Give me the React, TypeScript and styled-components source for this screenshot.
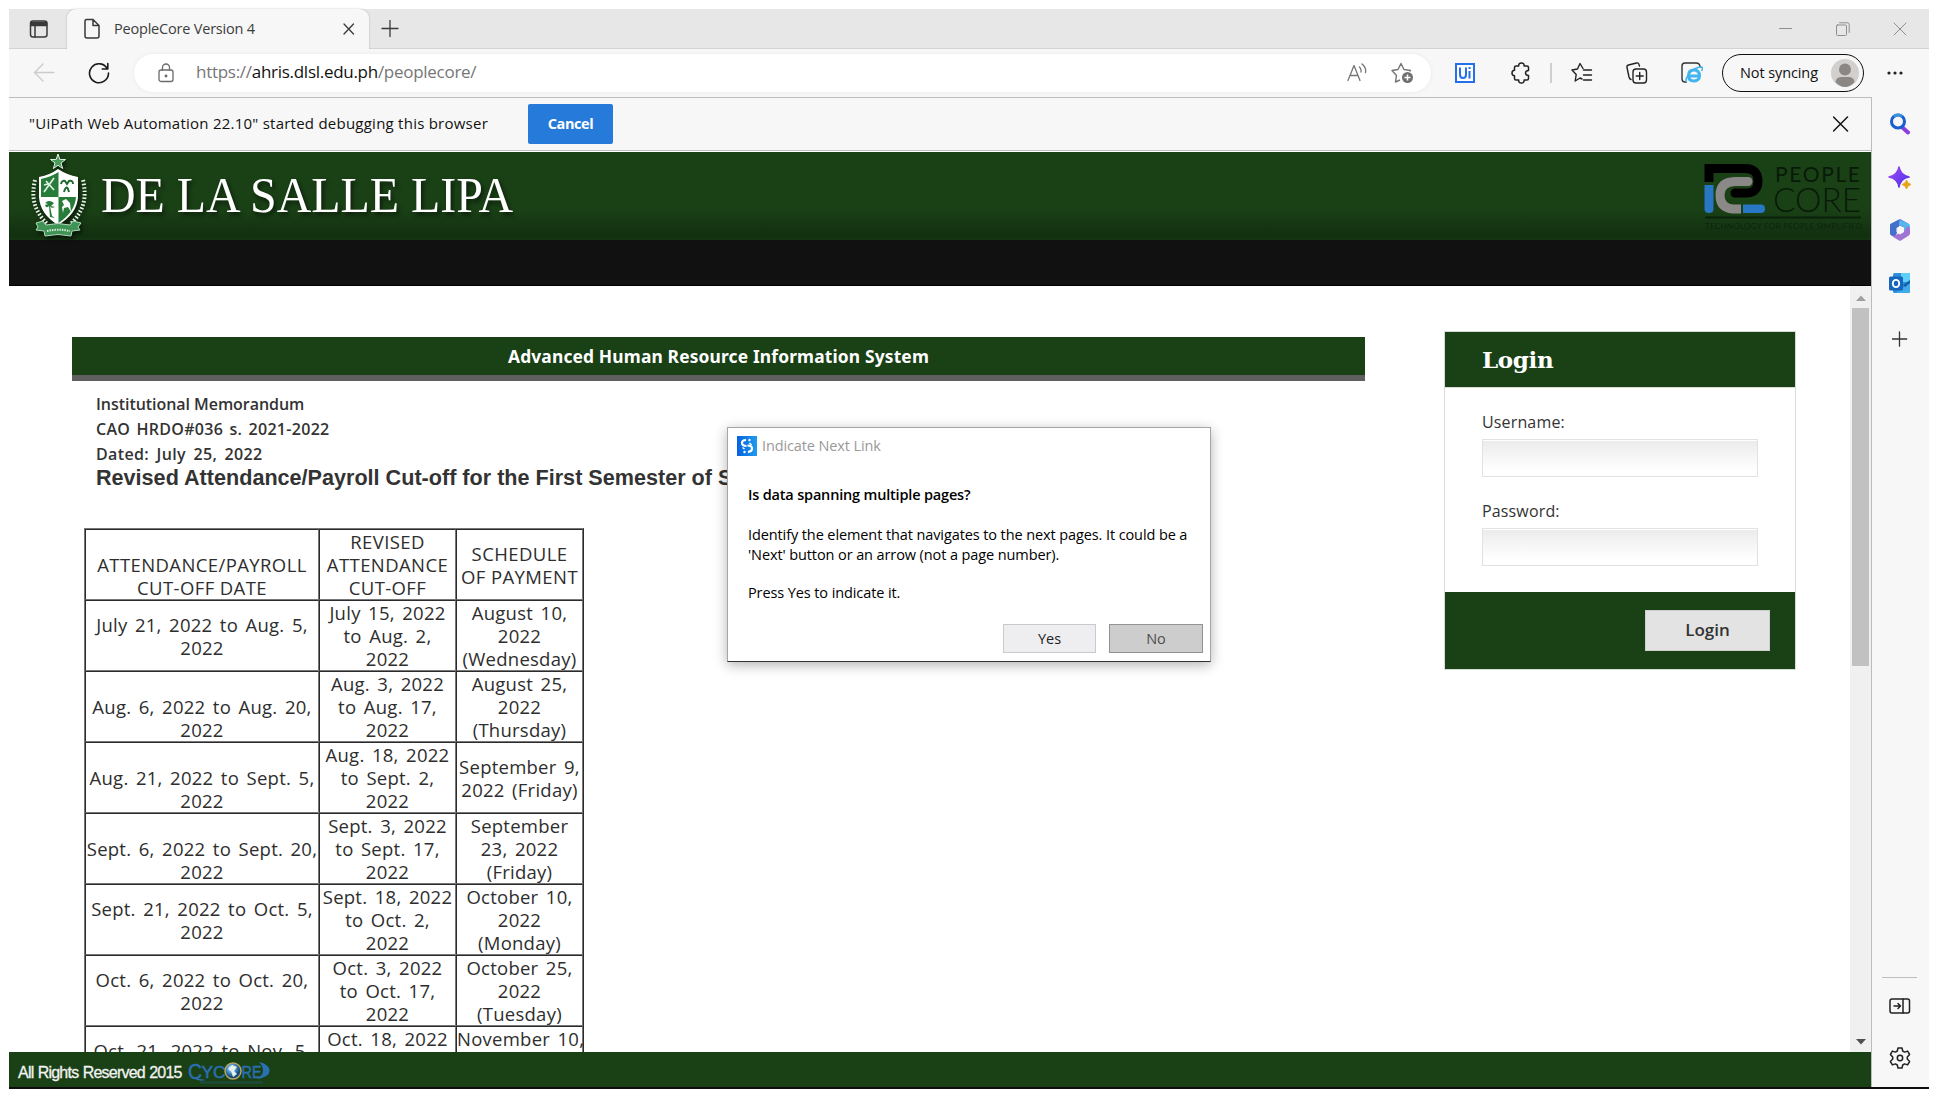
import React from "react";
import styled, { createGlobalStyle } from "styled-components";

const GREEN = "#1a4016";
const UI = `"Open Sans", "Noto Sans", sans-serif`;

const Global = createGlobalStyle`
  * { box-sizing: border-box; }
  body { margin: 0; background: #fff; }
  svg { display: block; flex: none; }
`;

const Screen = styled.div`
  position: relative;
  width: 1938px;
  height: 1098px;
  padding: 9px;
  overflow: hidden;
  background: #fff;
  font-family: ${UI};
`;
const Desktop = styled.div`
  width: 1920px;
  height: 1080px;
  display: flex;
  flex-direction: column;
  background: #f7f7f7;
  border-bottom: 2px solid #0d0d0d;
`;

/* ---------- window chrome ---------- */
const TabStrip = styled.div`
  height: 40px;
  flex: none;
  display: flex;
  align-items: stretch;
  background: #e7e7e7;
  box-shadow: inset 0 -1px 0 #d3d3d3;
`;
const TabMenu = styled.div`
  width: 58px;
  display: flex;
  align-items: center;
  padding-left: 20px;
`;
const Tab = styled.div`
  width: 302px;
  display: flex;
  align-items: center;
  background: #f7f7f7;
  border-radius: 9px 9px 0 0;
  box-shadow: 0 0 2px rgba(0, 0, 0, 0.25);
  clip-path: inset(-2px -3px 0 -3px);
  padding: 0 14px 0 16px;
`;
const TabTitle = styled.span`
  flex: 1;
  margin-left: 13px;
  padding-bottom: 2px;
  font-size: 14.5px;
  letter-spacing: -0.2px;
  color: #3d3d3d;
`;
const NewTab = styled.div`
  display: flex;
  align-items: center;
  padding-left: 12px;
  flex: 1;
`;
const WindowButtons = styled.div`
  display: flex;
  align-items: center;
  gap: 43px;
  padding-right: 22px;
`;
const Toolbar = styled.div`
  height: 48px;
  flex: none;
  display: flex;
  align-items: center;
  padding-left: 24px;
`;
const Nav = styled.div`
  width: 101px;
  display: flex;
  align-items: center;
  gap: 33px;
`;
const AddressBar = styled.div`
  width: 1297px;
  height: 38px;
  border-radius: 19px;
  background: #fff;
  display: flex;
  align-items: center;
  padding: 0 17px 0 24px;
  box-shadow: 0 0 4px rgba(0, 0, 0, 0.06);
`;
const Url = styled.div`
  flex: 1;
  margin-left: 22px;
  padding-bottom: 3px;
  font-size: 17px;
  letter-spacing: -0.28px;
  color: #767676;
  b { font-weight: 400; color: #111; }
`;
const Actions = styled.div`
  flex: 1;
  display: grid;
  grid-template-columns: 68px 44px 16px 46px 64px 45px auto 1fr;
  align-items: center;
  justify-items: center;
  padding-right: 4px;
`;
const Separator = styled.div`
  width: 2px;
  height: 20px;
  background: #cfcfcf;
`;
const Profile = styled.div`
  width: 142px;
  height: 38px;
  margin-left: 8px;
  border: 1.5px solid #111;
  border-radius: 19px;
  display: flex;
  align-items: center;
  justify-content: space-between;
  padding: 0 4px 0 17px;
  font-size: 14.5px;
  letter-spacing: -0.1px;
  color: #111;
  white-space: nowrap;
  span { padding-bottom: 2px; }
`;

/* ---------- page area ---------- */
const Body = styled.div`
  flex: 1;
  min-height: 0;
  display: flex;
`;
const Page = styled.div`
  width: 1863px;
  border-right: 1px solid #bcbcbc;
  border-top: 1px solid #bcbcbc;
  display: flex;
  flex-direction: column;
`;
const InfoBar = styled.div`
  height: 54px;
  flex: none;
  display: flex;
  align-items: center;
  padding: 0 22px 1px 20px;
  border-bottom: 1px solid #fff;
  box-shadow: inset 0 -1px 0 #bdbdc2;
`;
const InfoText = styled.div`
  width: 499px;
  padding-bottom: 2px;
  font-size: 15px;
  letter-spacing: 0.24px;
  color: #111;
  white-space: nowrap;
`;
const CancelButton = styled.button`
  width: 85px;
  height: 40px;
  border: 0;
  border-radius: 2px;
  background: #267ad9;
  color: #fff;
  font: 700 14.5px ${UI};
  letter-spacing: -0.4px;
  padding: 0 0 2px;
`;
const Spacer = styled.div`flex: 1;`;
const Banner = styled.div`
  height: 88px;
  flex: none;
  display: flex;
  justify-content: space-between;
  background: linear-gradient(#1a4016 0, #1a4016 66%, #12300f 96%, #153612 100%);
`;
const MenuBar = styled.div`
  height: 46px;
  flex: none;
  background: #111;
  border-bottom: 1px solid #000;
`;
const Scroller = styled.div`
  flex: 1;
  min-height: 0;
  display: flex;
  background: #fff;
`;
const Content = styled.div`
  flex: 1;
  overflow: hidden;
  display: flex;
  align-items: flex-start;
  padding-left: 63px;
`;
const Main = styled.div`
  width: 1293px;
  padding-top: 51px;
`;
const TitleBar = styled.div`
  height: 44px;
  border-bottom: 6px solid #5f5f5f;
  background: ${GREEN};
  color: #fff;
  text-align: center;
  font: 700 17.4px/39px "Noto Sans", "Open Sans", sans-serif;
  letter-spacing: 0.15px;
`;
const Memo = styled.div`
  padding: 11px 0 1px 24px;
  font-weight: 600;
  font-size: 16px;
  line-height: 25px;
  color: #333;
`;
const MemoLine = styled.div<{ $ls: number; $ws: number }>`
  letter-spacing: ${(p) => p.$ls}px;
  word-spacing: ${(p) => p.$ws}px;
`;
const MemoTitle = styled.div`
  padding-left: 24px;
  width: 719px;
  font: 700 21.6px/24px "Liberation Sans", Arial, sans-serif;
  color: #333;
  white-space: nowrap;
  margin-top: -2px;
`;
const Schedule = styled.table`
  margin: 38px 0 0 12px;
  width: 500px;
  table-layout: fixed;
  border-collapse: separate;
  border-spacing: 0;
  border: 1px solid;
  border-color: #777 #2b2b2b #2b2b2b #777;
`;
const Cell = styled.td<{ $low?: boolean; $head?: boolean }>`
  height: 71px;
  padding: ${(p) => (p.$low ? "23px 0 0" : "0")};
  border: 1px solid;
  border-color: #2b2b2b #777 #777 #2b2b2b;
  text-align: center;
  vertical-align: middle;
  white-space: nowrap;
  font-size: 18.5px;
  font-weight: ${(p) => (p.$head ? 500 : 400)};
  line-height: 23px;
  letter-spacing: ${(p) => (p.$head ? 0.4 : 0.25)}px;
  word-spacing: ${(p) => (p.$head ? 0 : 2.4)}px;
  color: #2e2e2e;
`;
const LoginCard = styled.div`
  width: 352px;
  margin: 45px 0 0 79px;
  border: 1px solid #d6ddd5;
`;
const LoginHead = styled.div`
  height: 56px;
  padding-left: 37px;
  background: ${GREEN};
  border-bottom: 1px solid #d6ddd5;
  color: #fff;
  font: 700 23px/56px "DejaVu Serif", serif;
  letter-spacing: -0.35px;
`;
const LoginFields = styled.div`
  height: 204px;
  padding: 21px 37px 0;
`;
const Field = styled.label`
  display: block;
  height: 89px;
  font-size: 16px;
  line-height: 26px;
  letter-spacing: 0.15px;
  color: #333;
`;
const Input = styled.input`
  display: block;
  width: 276px;
  height: 38px;
  margin-top: 4px;
  border: 1px solid #e2e2e2;
  box-shadow: inset 0 1px 0 #fff;
  background: linear-gradient(#ebebeb, #fff 85%);
`;
const LoginFoot = styled.div`
  height: 77px;
  display: flex;
  justify-content: flex-end;
  padding: 18px 25px 0 0;
  background: ${GREEN};
`;
const LoginButton = styled.button`
  width: 125px;
  height: 41px;
  border: 1px solid #cfcfcf;
  background: #e3e3e3;
  color: #333;
  font: 600 17px ${UI};
  padding: 0 0 2px;
`;
const Scrollbar = styled.div`
  width: 21px;
  background: #f0f0f0;
  display: flex;
  flex-direction: column;
  align-items: center;
  justify-content: space-between;
  padding: 9px 0 7px;
`;
const Thumb = styled.div`
  width: 17px;
  height: 358px;
  margin: 7px 0 auto;
  background: #c1c1c1;
`;
const Footer = styled.div`
  height: 35px;
  flex: none;
  display: flex;
  align-items: center;
  background: ${GREEN};
  color: #f2f2f2;
  font: 16px "Liberation Sans", Arial, sans-serif;
  letter-spacing: -0.78px;
  word-spacing: 0.6px;
  padding: 7px 0 0 9px;
  -webkit-text-stroke: 0.3px #f2f2f2;
`;

/* ---------- side rail ---------- */
const Rail = styled.div`
  width: 57px;
  padding-right: 2px;
  display: flex;
  flex-direction: column;
  align-items: center;
`;
const RailItem = styled.div<{ $h: number }>`
  height: ${(p) => p.$h}px;
  display: flex;
  align-items: center;
  justify-content: center;
`;
const RailRule = styled.div`
  width: 35px;
  height: 1px;
  margin-bottom: 4px;
  background: #bdbdbd;
`;

/* ---------- dialog ---------- */
const Dialog = styled.div`
  position: absolute;
  left: 727px;
  top: 427px;
  width: 484px;
  height: 235px;
  background: #fff;
  border: 1px solid #a5a5a5;
  border-bottom-color: #333;
  box-shadow: 0 3px 12px rgba(0, 0, 0, 0.3);
  display: flex;
  flex-direction: column;
`;
const DialogTitle = styled.div`
  display: flex;
  align-items: center;
  gap: 5px;
  padding: 8px 0 0 9px;
  height: 28px;
  font-size: 14.5px;
  letter-spacing: -0.12px;
  color: #9a9a9a;
  span { padding-bottom: 1px; }
`;
const DialogText = styled.div<{ $bold?: boolean; $top: number }>`
  padding: ${(p) => p.$top}px 0 0 20px;
  font-size: 14.5px;
  line-height: 20px;
  letter-spacing: ${(p) => (p.$bold ? "-0.18px" : "-0.1px")};
  font-weight: ${(p) => (p.$bold ? 600 : 400)};
  color: #000;
  white-space: nowrap;
`;
const DialogButtons = styled.div`
  display: flex;
  justify-content: flex-end;
  gap: 13px;
  padding: 21px 7px 0 0;
`;
const DialogButton = styled.button<{ $dark?: boolean }>`
  width: ${(p) => (p.$dark ? 94 : 93)}px;
  height: 29px;
  padding: 0;
  border: 1px solid ${(p) => (p.$dark ? "#939393" : "#c9cacd")};
  background: ${(p) => (p.$dark ? "#cdcdcd" : "#eeeef0")};
  color: ${(p) => (p.$dark ? "#4e4e4e" : "#222")};
  font: 14.5px ${UI};
`;

const Stroke: React.FC<{ w: number; h?: number; c?: string; sw?: number; children: React.ReactNode }> = ({
  w, h = w, c = "#222", sw = 1.4, children,
}) => (
  <svg width={w} height={h} viewBox={`0 0 ${w} ${h}`} fill="none" stroke={c} strokeWidth={sw} strokeLinecap="round" strokeLinejoin="round">
    {children}
  </svg>
);

const Crest = () => (
  <svg width="510" height="88" viewBox="0 0 510 88" style={{ filter: "drop-shadow(2px 3px 2px rgba(0,0,0,.55))" }}>
    <path d="M49 2l1.800 5.400 5.700.1-4.500 3.500 1.700 5.500-4.700-3.200-4.600 3.200 1.600-5.500-4.500-3.500 5.700-.1z" fill="#4a9c5c" stroke="#e6f3e8" strokeWidth="1" />
    <path d="M26 28c-4 18-1 30 12 44M74 28c4 18 1 30-12 44" fill="none" stroke="#e8f2e8" strokeWidth="4" strokeDasharray="1.600 1.900" />
    <path d="M30 25q11-2 19-8 9 6 20 8v20q-1 17-20 28-18-11-19-28z" fill="#fff" />
    <path d="M32 27q10-2 17.500-7v25H32zM49.500 45H67q-1 15-17.500 26z" fill="#277c3a" />
    <path d="M35 40l10-14M37 29l8 9M35 33l4-1" stroke="#dff0e2" strokeWidth="1.700" />
    <path d="M52 32q1-4 4-3l2 3 2-3q4-1 4 3M56 37q2-3 3 0l1 3m-4-3l-1 3" stroke="#1c6a30" strokeWidth="2" fill="none" />
    <path d="M36 51q4-4 9 0l-3 3 4 1q-4 2-5-1l2 10 3 2-5-1-1-11q-3 3-4-1l3-1z" fill="#277c3a" />
    <path d="M53 49l4-2 4 4 1 9-3-5-4 1-1 5-1-6 2-2z" fill="#fff" />
    <path d="M27 71l7-2 3 4q12-3 24 0l3-4 8 2-3 4 2 3-8 1-1 5q-13-3-26 0l-1-5-8-1 2-3z" fill="#3f9455" stroke="#b5d9bc" strokeWidth="1" />
    <path d="M38 79q11-2.500 23 0" stroke="#d7eadb" strokeWidth="2" strokeDasharray="1.500 1" fill="none" />
    <text x="92" y="60" fill="#fff" fontFamily='"Liberation Serif", serif' fontSize="51" textLength="412" lengthAdjust="spacingAndGlyphs">DE LA SALLE LIPA</text>
  </svg>
);

const PeopleCoreLogo = () => (
  <svg width="172" height="88" viewBox="0 0 172 88" fontFamily='Lato, "Open Sans", sans-serif'>
    <path d="M10 30V16.500H46Q59 16.500 59 29T46 41H36" fill="none" stroke="#000" strokeWidth="9" strokeLinejoin="miter" />
    <circle cx="36" cy="41" r="4.500" fill="#000" />
    <path d="M49 29.500H36Q21 30 21 43T34 57H42" fill="none" stroke="#8b8888" strokeWidth="9" />
    <circle cx="49" cy="29.500" r="4.500" fill="#8b8888" />
    <path d="M5.500 33h9v24q0 4-4.500 4t-4.500-4z" fill="#2777c4" />
    <path d="M44 52.500h18q4 0 4 4.300t-4 4.200H44z" fill="#2777c4" />
    <text x="76" y="30" fontSize="21" textLength="85" fill="#081a08">PEOPLE</text>
    <text x="74" y="60" fontSize="34" fontWeight="300" textLength="88" lengthAdjust="spacingAndGlyphs" fill="#081a08">CORE</text>
    <path d="M6 65.500H162" stroke="#0b220a" strokeWidth="2" />
    <text x="6" y="77" fontSize="8" textLength="157" fill="#0b240b">TECHNOLOGY FOR PEOPLE SIMPLIFIED</text>
  </svg>
);

const Cycore = () => (
  <svg width="86" height="28" viewBox="0 0 86 28" style={{ marginLeft: 6, letterSpacing: 0 }}>
    <defs>
      <radialGradient id="globe" cx=".4" cy=".35"><stop offset="0" stopColor="#fff" /><stop offset=".5" stopColor="#4d9bd0" /><stop offset="1" stopColor="#184c79" /></radialGradient>
    </defs>
    <g fill="#2a6fb0" stroke="#2a6fb0" strokeWidth=".5" fontFamily='"Liberation Sans", sans-serif'>
      <text x="0" y="20" fontSize="22" textLength="14" lengthAdjust="spacingAndGlyphs">C</text>
      <text x="13.500" y="19" fontSize="17" textLength="24" lengthAdjust="spacingAndGlyphs">YC</text>
      <text x="53.500" y="19" fontSize="17" textLength="20" lengthAdjust="spacingAndGlyphs">RE</text>
    </g>
    <path d="M71 3q10 2 10.500 8.500T69 20q6-4 6-8.500T71 3zM6 19q4 4 12 2" fill="#2a6fb0" />
    <circle cx="45" cy="12" r="8" fill="url(#globe)" stroke="#b4a564" strokeWidth="1.500" />
    <path d="M44 6l5 2-3 4 3 3-4 3-2-6-3-2z" fill="#e9eef0" />
    <path d="M12 23.500H75" stroke="#2368a6" strokeWidth="2" opacity=".3" />
  </svg>
);

const rows: { a: string[]; b: string[]; c: string[]; low?: boolean }[] = [
  { a: ["ATTENDANCE/PAYROLL", "CUT-OFF DATE"], b: ["REVISED", "ATTENDANCE", "CUT-OFF"], c: ["SCHEDULE", "OF PAYMENT"], low: true },
  { a: ["July 21, 2022 to Aug. 5,", "2022"], b: ["July 15, 2022", "to Aug. 2,", "2022"], c: ["August 10,", "2022", "(Wednesday)"] },
  { a: ["Aug. 6, 2022 to Aug. 20,", "2022"], b: ["Aug. 3, 2022", "to Aug. 17,", "2022"], c: ["August 25,", "2022", "(Thursday)"], low: true },
  { a: ["Aug. 21, 2022 to Sept. 5,", "2022"], b: ["Aug. 18, 2022", "to Sept. 2,", "2022"], c: ["September 9,", "2022 (Friday)"], low: true },
  { a: ["Sept. 6, 2022 to Sept. 20,", "2022"], b: ["Sept. 3, 2022", "to Sept. 17,", "2022"], c: ["September", "23, 2022", "(Friday)"], low: true },
  { a: ["Sept. 21, 2022 to Oct. 5,", "2022"], b: ["Sept. 18, 2022", "to Oct. 2,", "2022"], c: ["October 10,", "2022", "(Monday)"] },
  { a: ["Oct. 6, 2022 to Oct. 20,", "2022"], b: ["Oct. 3, 2022", "to Oct. 17,", "2022"], c: ["October 25,", "2022", "(Tuesday)"] },
  { a: ["Oct. 21, 2022 to Nov. 5,", "2022"], b: ["Oct. 18, 2022", "to Nov. 2,", "2022"], c: ["November 10,", "2022", "(Thursday)"] },
];

const Lines = ({ of }: { of: string[] }) => (
  <>{of.map((t, i) => <React.Fragment key={i}>{i > 0 && <br />}{t}</React.Fragment>)}</>
);

export default function App() {
  return (
    <Screen>
      <Global />
      <Desktop>
        <TabStrip>
          <TabMenu>
            <Stroke w={20} c="#3a3a3a" sw={1.5}>
              <rect x="1.500" y="2" width="16.500" height="16" rx="2.500" />
              <path d="M2 3.500h15.500v3H2z" fill="#3a3a3a" />
              <path d="M6 6v12" />
            </Stroke>
          </TabMenu>
          <Tab>
            <Stroke w={18} h={22} c="#3a3a3a" sw={1.5}>
              <path d="M3.500 1.500h6.500l6 6V18a2 2 0 0 1-2 2H4a2 2 0 0 1-2-2V3q0-1.500 1.500-1.500zM10 1.500V7.500h6" />
            </Stroke>
            <TabTitle>PeopleCore Version 4</TabTitle>
            <Stroke w={12} c="#3a3a3a" sw={1.300}><path d="M1 1l9.500 10M10.500 1L1 11" /></Stroke>
          </Tab>
          <NewTab><Stroke w={18} c="#3a3a3a" sw={1.300}><path d="M9 .5v16M1 8.500h16" /></Stroke></NewTab>
          <WindowButtons>
            <Stroke w={14} c="#8e8e8e" sw={1}><path d="M.500 6.500h12" /></Stroke>
            <Stroke w={14} c="#8e8e8e" sw={1}><rect x=".5" y="3" width="10" height="10.500" rx="1" /><path d="M3.500.8h8q1.700 0 1.700 1.700v8" /></Stroke>
            <Stroke w={14} c="#8e8e8e" sw={1}><path d="M1 1l12 12M13 1L1 13" /></Stroke>
          </WindowButtons>
        </TabStrip>

        <Toolbar>
          <Nav>
            <Stroke w={22} c="#cbcbcb" sw={1.400}><path d="M21 10.500H1.500M10 2L1.500 10.500l8.500 8.500" /></Stroke>
            <Stroke w={22} c="#1b1b1b" sw={1.600}><path d="M19.500 7A9.500 9.500 0 1 0 20.500 11M19.800 1.500V7h-5.500" /></Stroke>
          </Nav>
          <AddressBar>
            <Stroke w={16} h={20} c="#6b6b6b" sw={1.300}>
              <rect x="1" y="7" width="14" height="11.500" rx="2" /><path d="M4.500 7V4.500a3.500 3.500 0 0 1 7 0V7" /><circle cx="8" cy="13" r=".8" fill="#6b6b6b" />
            </Stroke>
            <Url>https://<b>ahris.dlsl.edu.ph</b>/peoplecore/</Url>
            <Stroke w={20} c="#757575" sw={1.300}>
              <path d="M1 17.500L7 2.500l6 15M3 12.500h8M12.500 4q2 2 1.500 5M15 1q4.500 3.500 3.500 8.500" />
            </Stroke>
            <svg width="23" height="22" viewBox="0 0 23 22" style={{ marginLeft: 24 }} fill="none" stroke="#757575" strokeWidth="1.400" strokeLinejoin="round">
              <path d="M9 18l-4.500 2 1-6.500L1 8.500l6-1L10 1.500l3 6 6.500 1-1 1" />
              <circle cx="16.500" cy="15.500" r="5.500" fill="#707070" stroke="none" />
              <path d="M16.500 12.500v6M13.500 15.500h6" stroke="#fff" />
            </svg>
          </AddressBar>
          <Actions>
            <svg width="20" height="20" viewBox="0 0 20 20">
              <path d="M1 1h18v18H1z" fill="#fff" stroke="#2470e8" strokeWidth="2" />
              <path d="M5 4.500v7q0 3.500 3 3.500t3-3.500v-7M14.500 8v7.500M14.500 4v2" fill="none" stroke="#2470e8" strokeWidth="2" />
            </svg>
            <Stroke w={20} h={22} sw={1.500}>
              <path d="M5 4H7.700q-.3-3 2.700-3t2.700 3H16q1.500 0 1.500 1.500V8.500q-3 .2-3 2.500t3 2.500v3Q17.500 18 16 18h-2.900q.3 3-2.700 3t-2.700-3H5q-1.500 0-1.500-1.500v-2.800Q1 13.500 1 11t2.500-2.700V5.500Q3.500 4 5 4z" />
            </Stroke>
            <Separator />
            <Stroke w={22} sw={1.400}>
              <path d="M12 6.500L9 1.500 6.500 7 1 8l4.200 4.500-1 6.500L9 16l2 1M12.500 8h8M12.500 13h8M12.500 18h8" />
            </Stroke>
            <Stroke w={22} sw={1.400}>
              <rect x="7" y="7" width="13.500" height="14" rx="3" /><path d="M13.700 10.500v7M10.200 14h7M5 17.500Q3.500 17 3 15L1 5.500Q.5 3.500 2.500 3l8-2q2-.5 2.500 1.500l.5 1.500" />
            </Stroke>
            <svg width="22" height="22" viewBox="0 0 22 22">
              <path d="M6 20H4q-3 0-3-3V4q0-3 3-3h11q4 0 4 4" fill="none" stroke="#333" strokeWidth="1.400" />
              <path d="M18.500 15.500q-1.500 3.500-5.500 3.500-5.500 0-5.500-5.500T13 8q5.500 0 5.500 6H9" fill="none" stroke="#42b4ee" strokeWidth="3" />
              <path d="M6 20q-3-1 2-8T21 5q1 1-.5 4" fill="none" stroke="#42b4ee" strokeWidth="1.500" />
            </svg>
            <Profile>
              <span>Not syncing</span>
              <svg width="28" height="28" viewBox="0 0 28 28">
                <circle cx="14" cy="14" r="14" fill="#d2d0ce" />
                <circle cx="14" cy="10.500" r="6" fill="#8a8785" />
                <path d="M4.500 23Q5 18 11 18h6q6 0 6.500 5Q19 28 14 28T4.500 23z" fill="#8a8785" />
              </svg>
            </Profile>
            <svg width="18" height="6" viewBox="0 0 18 6" fill="#222"><circle cx="3" cy="3" r="1.600" /><circle cx="9" cy="3" r="1.600" /><circle cx="15" cy="3" r="1.600" /></svg>
          </Actions>
        </Toolbar>

        <Body>
          <Page>
            <InfoBar>
              <InfoText>"UiPath Web Automation 22.10" started debugging this browser</InfoText>
              <CancelButton>Cancel</CancelButton>
              <Spacer />
              <Stroke w={16} c="#111" sw={1.500}><path d="M.500 1l14 14M14.500 1L.500 15" /></Stroke>
            </InfoBar>
            <Banner><Crest /><PeopleCoreLogo /></Banner>
            <MenuBar />
            <Scroller>
              <Content>
                <Main>
                  <TitleBar>Advanced Human Resource Information System</TitleBar>
                  <Memo>
                    <MemoLine $ls={-0.05} $ws={0}>Institutional Memorandum</MemoLine>
                    <MemoLine $ls={0.3} $ws={1.8}>CAO HRDO#036 s. 2021-2022</MemoLine>
                    <MemoLine $ls={0.35} $ws={3}>Dated: July 25, 2022</MemoLine>
                  </Memo>
                  <MemoTitle>Revised Attendance/Payroll Cut-off for the First Semester of S</MemoTitle>
                  <Schedule>
                    <colgroup><col width="234" /><col width="137" /><col width="127" /></colgroup>
                    <tbody>
                      {rows.map((r, i) => (
                        <tr key={i}>
                          <Cell $low={r.low} $head={i === 0}><Lines of={r.a} /></Cell>
                          <Cell $head={i === 0}><Lines of={r.b} /></Cell>
                          <Cell $head={i === 0}><Lines of={r.c} /></Cell>
                        </tr>
                      ))}
                    </tbody>
                  </Schedule>
                </Main>
                <LoginCard>
                  <LoginHead>Login</LoginHead>
                  <LoginFields>
                    <Field>Username:<Input /></Field>
                    <Field>Password:<Input type="password" /></Field>
                  </LoginFields>
                  <LoginFoot><LoginButton>Login</LoginButton></LoginFoot>
                </LoginCard>
              </Content>
              <Scrollbar>
                <svg width="10" height="6" viewBox="0 0 10 6"><path d="M0 6l5-5.500L10 6z" fill="#a0a0a0" /></svg>
                <Thumb />
                <svg width="10" height="6" viewBox="0 0 10 6"><path d="M0 0l5 5.500L10 0z" fill="#505050" /></svg>
              </Scrollbar>
            </Scroller>
            <Footer>All Rights Reserved 2015<Cycore /></Footer>
          </Page>

          <Rail>
            <RailItem $h={54}>
              <svg width="22" height="22" viewBox="0 0 22 22" fill="none">
                <path d="M13.500 14.500l5.500 5" stroke="#8a3fe0" strokeWidth="4" strokeLinecap="round" />
                <circle cx="9" cy="8.500" r="6.500" stroke="#1a5fd0" strokeWidth="3" /><path d="M5 3.500a6.500 6.500 0 0 1 8 0" stroke="#3a93dc" strokeWidth="3" />
              </svg>
            </RailItem>
            <RailItem $h={54}>
              <svg width="24" height="24" viewBox="0 0 24 24">
                <defs><linearGradient id="spark" x1="0" y1="0" x2="1" y2="1"><stop offset="0" stopColor="#a34bf5" /><stop offset="1" stopColor="#4a2fe8" /></linearGradient></defs>
                <path d="M11 1q1.500 8.500 10 10-8.500 1.500-10 10Q9.500 12.500 1 11q8.500-1.500 10-10z" fill="url(#spark)" stroke="url(#spark)" strokeWidth="1.500" strokeLinejoin="round" />
                <path d="M18.500 14q.7 3.800 4.500 4.500-3.800.7-4.500 4.500-.7-3.800-4.500-4.500 3.800-.7 4.500-4.500z" fill="#e6a414" stroke="#e6a414" />
              </svg>
            </RailItem>
            <RailItem $h={50}>
              <svg width="22" height="24" viewBox="0 0 22 24">
                <path d="M11 1L20 6v6L14 9 9 7l-1 8-2 4-5-3V7z" fill="#5b62c9" />
                <path d="M10 1.500L20 6q1 .5 1 2v8l-6-3V9L9 6.500z" fill="#56b6ee" />
                <path d="M1 7q0-1 1-1.500L9 2q2-1 1 3v4l-3 3v4l-4 2q-2-1-2-3z" fill="#4371c9" />
                <path d="M21 15q0 2-1.500 2.800L12 22.500q-1 .6-2 0L2.500 18q3 1 6-2l6-3q3-1 3-5 3.500 1 3.500 3z" fill="#a174d4" />
                <path d="M11 8l4 2v4l-4 2.500L7.500 14v-4z" fill="#f7f7f7" />
              </svg>
            </RailItem>
            <RailItem $h={55}>
              <svg width="22" height="22" viewBox="0 0 22 22">
                <rect x="4" y="1" width="17" height="20" rx="1.500" fill="#2f8fdc" /><path d="M12 1h7.500q1.500 0 1.500 1.500V10h-9z" fill="#5cd0fb" /><path d="M7 21l14-10v8.500q0 1.500-1.500 1.500z" fill="#3fa9ea" /><path d="M14 13l7-5v3l-5 4z" fill="#1360a8" />
                <rect x="0" y="4.500" width="14" height="14" rx="1.500" fill="#1666bd" /><ellipse cx="7" cy="11.500" rx="3.200" ry="3.600" fill="none" stroke="#fff" strokeWidth="1.900" />
              </svg>
            </RailItem>
            <RailItem $h={58}><Stroke w={16} c="#333" sw={1.300}><path d="M7.500 .8v14.400M.300 8h14.400" /></Stroke></RailItem>
            <Spacer />
            <RailRule />
            <RailItem $h={47}>
              <Stroke w={22} h={18} c="#222" sw={1.500}><rect x="1" y="2" width="19.500" height="14" rx="2" /><path d="M14 2v14M5 9h6.500M9 6.500L11.500 9 9 11.500" /></Stroke>
            </RailItem>
            <RailItem $h={58}>
              <Stroke w={22} c="#222" sw={1.500}>
                <circle cx="11" cy="11" r="2.700" />
                <path d="M9 1h4l.7 3 1.900 1.100 3-1 2 3.400L18.300 9.900v2.200l2.300 2.400-2 3.400-3-1L13.700 18 13 21H9l-.7-3-1.900-1.100-3 1-2-3.400 2.300-2.400V9.900L1.400 7.500l2-3.400 3 1L8.300 4z" />
              </Stroke>
            </RailItem>
          </Rail>
        </Body>
      </Desktop>

      <Dialog>
        <DialogTitle>
          <svg width="20" height="20" viewBox="0 0 20 20">
            <defs><linearGradient id="studio"><stop offset="0" stopColor="#0562df" /><stop offset="1" stopColor="#1f9bee" /></linearGradient></defs>
            <rect width="20" height="20" fill="url(#studio)" />
            <path d="M9 4Q5 4 5 7t4.500 3M10.500 9.500Q15 9.500 15 12.500T11 16" fill="none" stroke="#fff" strokeWidth="2.200" />
            <circle cx="12.500" cy="4" r="1.200" fill="#fff" /><circle cx="7.500" cy="16" r="1.200" fill="#fff" />
            <path d="M12.500 7l2 2M5.500 11.500l2 1.500" stroke="#fff" strokeWidth="1.500" />
          </svg>
          <span>Indicate Next Link</span>
        </DialogTitle>
        <DialogText $bold $top={29}>Is data spanning multiple pages?</DialogText>
        <DialogText $top={20}>Identify the element that navigates to the next pages. It could be a<br />'Next' button or an arrow (not a page number).</DialogText>
        <DialogText $top={18}>Press Yes to indicate it.</DialogText>
        <DialogButtons>
          <DialogButton>Yes</DialogButton>
          <DialogButton $dark>No</DialogButton>
        </DialogButtons>
      </Dialog>
    </Screen>
  );
}
